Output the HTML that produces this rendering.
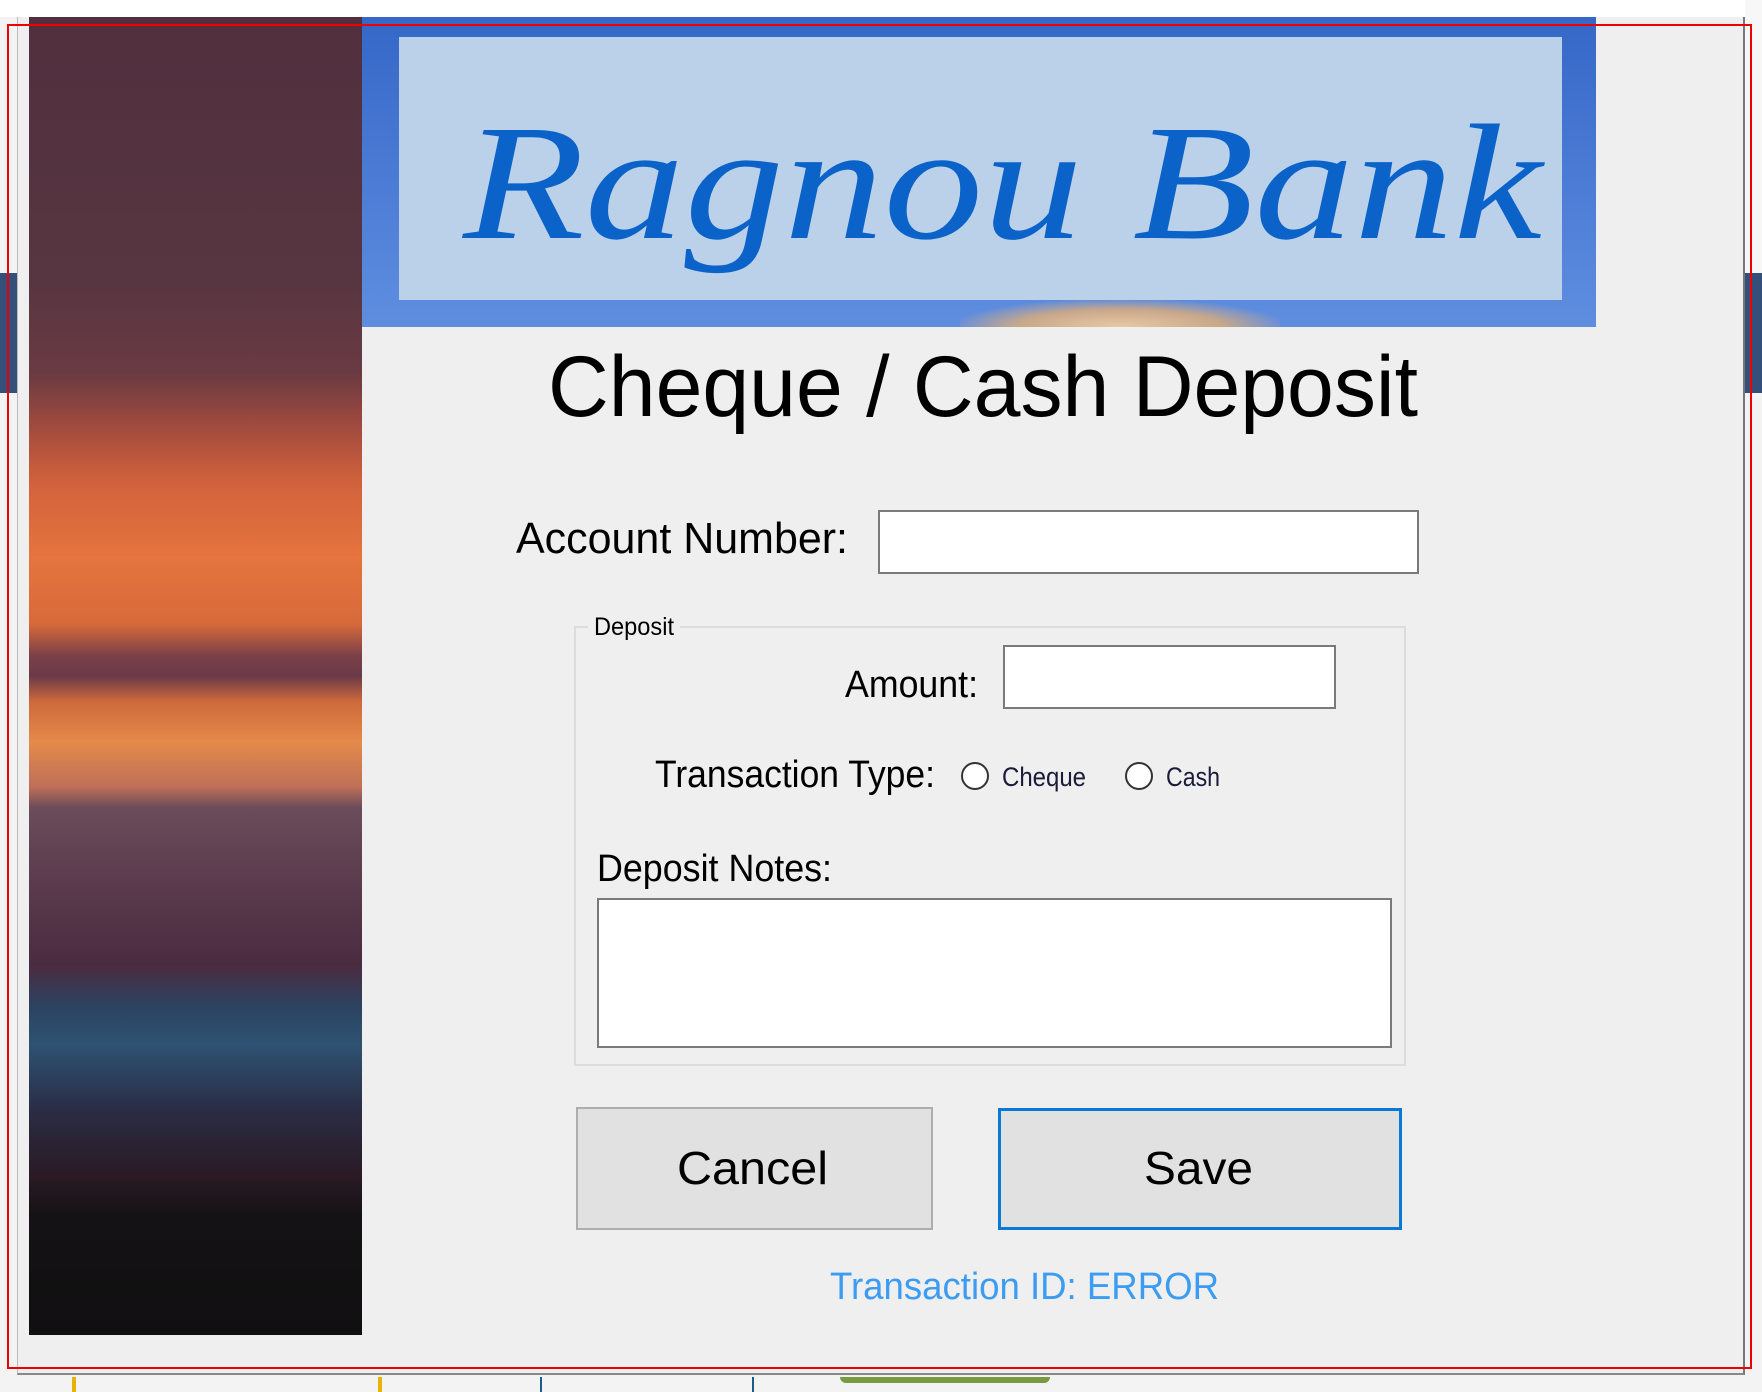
<!DOCTYPE html>
<html><head><meta charset="utf-8"><style>
*{margin:0;padding:0;box-sizing:border-box}
body{width:1762px;height:1392px;position:relative;overflow:hidden;background:#f3f3f3;font-family:"Liberation Sans",sans-serif}
.a{position:absolute}
</style></head><body>
<div class="a" style="left:0;top:0;width:1762px;height:17px;background:#fff"></div>
<div class="a" style="left:0;top:273px;width:17px;height:120px;background:#34507a"></div>
<div class="a" style="left:1745px;top:273px;width:17px;height:120px;background:#34507a"></div>
<div class="a" style="left:1745px;top:0;width:17px;height:273px;background:#f7f7f7"></div>
<!-- window -->
<div class="a" style="left:17px;top:17px;width:1728px;height:1358px;background:#efefef;border-right:2px solid #777;border-bottom:2px solid #888;border-left:1px solid #bbb"></div>
<!-- photo -->
<div class="a" style="left:29px;top:17px;width:333px;height:1318px;background:linear-gradient(180deg,#512f3e 0%,#573641 20%,#6a3a42 27%,#a04a3e 31%,#d2623c 35.4%,#e5743e 41%,#d86a3a 46%,#7a4048 48.5%,#6a3a48 50%,#d06a3c 52%,#e48a4a 55%,#c07058 58.4%,#6a4c5a 60%,#5a3a4c 66%,#4a2c40 72%,#2c4260 75%,#2e5272 78%,#2a2c44 83%,#2a1a24 88%,#141214 91%,#111011 100%)"></div>
<!-- banner -->
<div class="a" style="left:362px;top:17px;width:1234px;height:310px;background:linear-gradient(180deg,#3567c8,#5f8ee0)"></div>
<div class="a" style="left:960px;top:300px;width:320px;height:27px;background:radial-gradient(ellipse at 50% 100%,#e6c9a5 0%,#c9a88a 45%,rgba(120,140,220,0) 75%)"></div>
<div class="a" style="left:399px;top:37px;width:1163px;height:263px;background:#bbd1ea"></div>
<svg class="a" style="left:0;top:0" width="1762" height="1392">
<text x="463" y="238" textLength="1079" lengthAdjust="spacingAndGlyphs" font-family="Liberation Serif,serif" font-style="italic" font-size="165" fill="#0b63c9">Ragnou Bank</text>
<text x="548" y="416" textLength="870" lengthAdjust="spacingAndGlyphs" font-family="Liberation Sans,sans-serif" font-size="86" fill="#000">Cheque / Cash Deposit</text>
<text x="516" y="553" textLength="332" lengthAdjust="spacingAndGlyphs" font-size="44" fill="#000">Account Number:</text>
<text x="845" y="697" textLength="133" lengthAdjust="spacingAndGlyphs" font-size="38" fill="#000">Amount:</text>
<text x="655" y="787" textLength="280" lengthAdjust="spacingAndGlyphs" font-size="38" fill="#000">Transaction Type:</text>
<text x="1002" y="786" textLength="84" lengthAdjust="spacingAndGlyphs" font-size="27" fill="#1a1a3a">Cheque</text>
<text x="1166" y="786" textLength="54" lengthAdjust="spacingAndGlyphs" font-size="27" fill="#1a1a3a">Cash</text>
<text x="597" y="881" textLength="235" lengthAdjust="spacingAndGlyphs" font-size="38" fill="#000">Deposit Notes:</text>
<text x="830" y="1299" textLength="389" lengthAdjust="spacingAndGlyphs" font-size="38" fill="#3c9cf2">Transaction ID: ERROR</text>
</svg>
<div class="a" style="left:878px;top:510px;width:541px;height:64px;background:#fff;border:2px solid #7a7a7a"></div>
<!-- groupbox -->
<div class="a" style="left:574px;top:626px;width:832px;height:440px;border:2px solid #dcdcdc"></div>
<svg class="a" style="left:588px;top:612px" width="92" height="30"><rect x="0" y="0" width="92" height="30" fill="#efefef"/><text x="6" y="23" textLength="80" lengthAdjust="spacingAndGlyphs" font-family="Liberation Sans,sans-serif" font-size="25" fill="#000">Deposit</text></svg>
<div class="a" style="left:1003px;top:645px;width:333px;height:64px;background:#fff;border:2px solid #7a7a7a"></div>
<div class="a" style="left:961px;top:762px;width:28px;height:28px;border-radius:50%;background:#fff;border:2px solid #333"></div>
<div class="a" style="left:1125px;top:762px;width:28px;height:28px;border-radius:50%;background:#fff;border:2px solid #333"></div>
<div class="a" style="left:597px;top:898px;width:795px;height:150px;background:#fff;border:2px solid #7a7a7a"></div>
<!-- buttons -->
<div class="a" style="left:576px;top:1107px;width:357px;height:123px;background:#e1e1e1;border:2px solid #adadad"></div>
<div class="a" style="left:998px;top:1108px;width:404px;height:122px;background:#e1e1e1;border:3px solid #0a78d7"></div>
<svg class="a" style="left:0;top:0" width="1762" height="1392">
<text x="677" y="1184" textLength="151" lengthAdjust="spacingAndGlyphs" font-family="Liberation Sans,sans-serif" font-size="46" fill="#000">Cancel</text>
<text x="1144" y="1184" textLength="109" lengthAdjust="spacingAndGlyphs" font-family="Liberation Sans,sans-serif" font-size="46" fill="#000">Save</text>
<rect x="8" y="25" width="1743" height="1343" fill="none" stroke="#e00" stroke-width="2"/>
</svg>
<div class="a" style="left:72px;top:1377px;width:310px;height:15px;border-left:4px solid #e8b400;border-right:4px solid #e8b400"></div>
<div class="a" style="left:540px;top:1377px;width:214px;height:15px;border-left:2px solid #1d5a8a;border-right:2px solid #1d5a8a"></div>
<div class="a" style="left:840px;top:1377px;width:210px;height:6px;background:#7a9a40;border-radius:0 0 8px 8px"></div>
</body></html>
